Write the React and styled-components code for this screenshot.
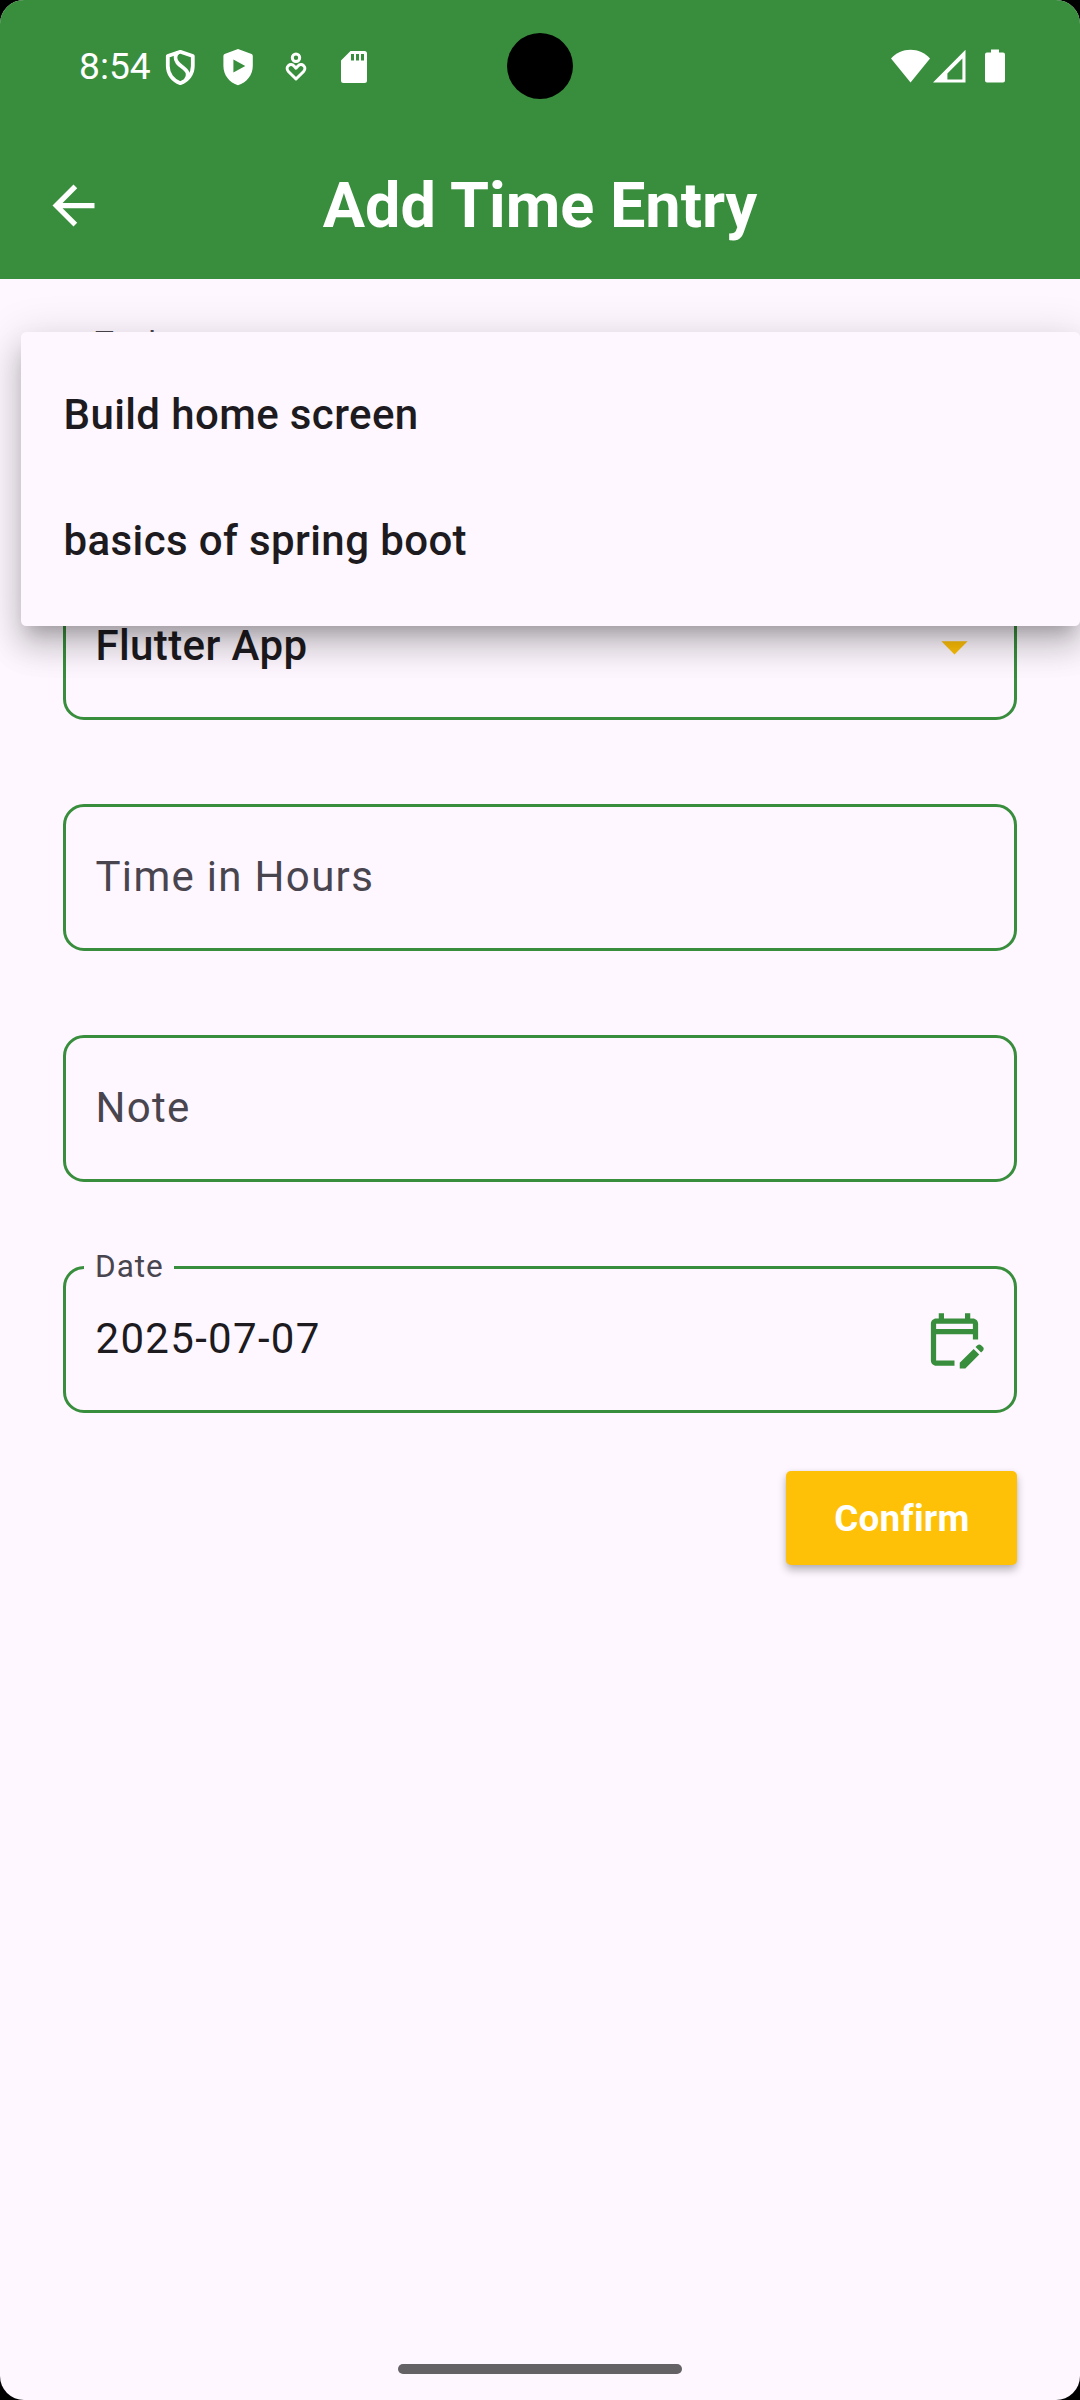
import React from "react";
import styled, { createGlobalStyle } from "styled-components";

const green = "#388e3c";
const amber = "#ffc107";
const surface = "#fef7ff";
const ink = "#1d1b20";
const muted = "#49454f";

const GlobalStyle = createGlobalStyle`
  *, *::before, *::after { box-sizing: border-box; }
  body { margin: 0; background: #000; }
`;

const Screen = styled.div`
  position: relative;
  display: flex;
  flex-direction: column;
  width: 1080px;
  height: 2400px;
  overflow: hidden;
  border-radius: 24px;
  background: ${surface};
  color: ${ink};
  font-family: Roboto, "Liberation Sans", sans-serif;
`;

const StatusBar = styled.header`
  position: relative;
  display: flex;
  align-items: center;
  justify-content: space-between;
  height: 132px;
  padding: 0 75px 0 79px;
  background: ${green};
  color: #fff;
`;

const StatusGroup = styled.div`
  display: flex;
  align-items: center;
  gap: ${(p) => p.$gap}px;
`;

const Clock = styled.span`
  width: 64px;
  font-size: 37.2px;
  white-space: nowrap;
`;

const CameraCutout = styled.div`
  position: absolute;
  left: 507px;
  top: 33px;
  width: 66px;
  height: 66px;
  border-radius: 50%;
  background: #000;
`;

const AppBar = styled.div`
  display: grid;
  grid-template-columns: 147px 1fr 147px;
  align-items: center;
  height: 147px;
  background: ${green};
  color: #fff;
`;

const BackButton = styled.button`
  display: flex;
  align-items: center;
  justify-content: center;
  width: 147px;
  height: 147px;
  padding: 0;
  border: 0;
  background: none;
  color: inherit;
`;

const Title = styled.h1`
  margin: 0;
  font-size: 63px;
  font-weight: 700;
  text-align: center;
  white-space: nowrap;
`;

const Form = styled.main`
  display: flex;
  flex: 1;
  flex-direction: column;
  gap: 84px;
  padding: 63px 63px 0;
`;

const Field = styled.div`
  position: relative;
  display: flex;
  align-items: center;
  justify-content: space-between;
  height: 147px;
  padding: 0 28px 0 29px;
  border: 3px solid ${green};
  border-radius: 21px;
`;

const FloatingLabel = styled.span`
  position: absolute;
  left: 18px;
  top: -21px;
  padding: 0 10.5px 0 11px;
  background: ${surface};
  color: ${muted};
  font-size: 31.5px;
  line-height: 37px;
  letter-spacing: 0.98px;
`;

const FieldText = styled.span`
  padding: 0 0 2px 0.5px;
  color: ${(p) => (p.$placeholder ? muted : ink)};
  font-size: 42px;
  font-weight: ${(p) => (p.$medium ? 500 : 400)};
  letter-spacing: ${(p) => (p.$medium ? 0.39 : 1.31)}px;
  white-space: nowrap;
`;

const Actions = styled.div`
  display: flex;
  justify-content: flex-end;
  margin-top: -26px;
`;

const ConfirmButton = styled.button`
  width: 231px;
  height: 94px;
  padding: 0 0 0 1px;
  border: 0;
  border-radius: 5px;
  background: ${amber};
  box-shadow: 0 5px 9px rgba(0, 0, 0, 0.28), 0 0 4px rgba(0, 0, 0, 0.06);
  color: #fff;
  font: 700 36.75px Roboto, "Liberation Sans", sans-serif;
  letter-spacing: 0.26px;
`;

const Menu = styled.ul`
  position: absolute;
  left: 21px;
  top: 332px;
  width: 1059px;
  margin: 0;
  padding: 21px 0;
  border-radius: 5.25px;
  background: ${surface};
  box-shadow: 0 13px 16px -8px rgba(0, 0, 0, 0.2), 0 21px 31px 2.6px rgba(0, 0, 0, 0.14),
    0 8px 43px 5.2px rgba(0, 0, 0, 0.12);
  list-style: none;
`;

const MenuItem = styled.li`
  display: flex;
  align-items: center;
  height: 126px;
  padding: 0 42px 3px 42.5px;
  font-size: 42px;
  font-weight: 500;
  letter-spacing: 0.39px;
`;

const NavBar = styled.footer`
  display: flex;
  justify-content: center;
  height: 36px;
`;

const Handle = styled.div`
  width: 284px;
  height: 10px;
  border-radius: 5px;
  background: #656266;
`;

const Glyph = styled.svg`
  display: block;
  flex: none;
  fill: ${(p) => p.$color || "#fff"};
`;

const ShieldS = () => (
  <Glyph width="42" height="42" viewBox="0 0 42 42">
    <g fill="none" stroke="#fff" strokeWidth="3.8" strokeLinejoin="round">
      <path d="M21.3 6.800 33.800 11V21C33.800 29 28.800 35.600 21.300 38.200 13.800 35.600 8.800 29 8.800 21V11Z" />
      <path d="M18.800 7.500C16 10 15.800 14 18.300 17.500 21.300 21.500 27.300 23.500 28.600 28 29.200 30.500 28.300 33 26.700 35" />
    </g>
  </Glyph>
);

const ShieldPlay = () => (
  <Glyph width="42" height="42" viewBox="0 0 42 42">
    <path fillRule="evenodd" d="M21 4 34.6 9Q35.8 9.5 35.8 11V21C35.8 30 29.5 37.8 21 40.2 12.5 37.8 6.4 30 6.4 21V11Q6.4 9.5 7.6 9ZM16.4 14.6V27.6L28.3 21.1Z" />
  </Glyph>
);

const HeartPerson = () => (
  <Glyph width="42" height="42" viewBox="0 0 42 42">
    <g fill="none" stroke="#fff" strokeWidth="3" strokeLinejoin="round">
      <circle cx="21" cy="12.8" r="3.7" />
      <path d="M21 34 13.400 26.500C9.500 22 15.500 17.200 19 21L21 23.200 23 21C26.500 17.200 32.500 22 28.600 26.500Z" />
    </g>
  </Glyph>
);

const SdCard = () => (
  <Glyph width="42" height="42" viewBox="0 0 42 42">
    <path fillRule="evenodd" d="M17.500 6H31.500A2.500 2.500 0 0 1 34 8.500V35.500A2.500 2.500 0 0 1 31.500 38H10.500A2.500 2.500 0 0 1 8 35.500V15.500ZM18 9V15.600H21V9ZM23 9V15.600H26V9ZM28 9V15.600H31V9Z" />
  </Glyph>
);

const Wifi = () => (
  <Glyph width="39" height="34" viewBox="0 0 39 34">
    <path d="M19.500 33.500 0 9.500C5 4 12 .8 19.500 .8S34 4 39 9.500Z" />
  </Glyph>
);

const Signal = () => (
  <Glyph width="33" height="34" viewBox="0 0 33 34">
    <path fillRule="evenodd" d="M32.500 .8V33.500H0ZM29.400 9.400 14.400 24.500V30.400H29.400Z" />
  </Glyph>
);

const Battery = () => (
  <Glyph width="20" height="34" viewBox="0 0 20 34">
    <path d="M6 .6H14V3.600H18Q20 3.600 20 5.600V31.500Q20 33.500 18 33.500H2Q0 33.500 0 31.500V5.600Q0 3.600 2 3.600H6Z" />
  </Glyph>
);

const Cellular = styled.div`
  display: flex;
  align-items: center;
  gap: 3.5px;
`;

const BackArrow = () => (
  <Glyph width="63" height="63" viewBox="0 0 24 24">
    <path d="M20 11H7.830l5.590-5.590L12 4l-8 8 8 8 1.410-1.410L7.830 13H20v-2z" />
  </Glyph>
);

const DropArrow = () => (
  <Glyph width="63" height="63" viewBox="0 0 24 24" $color={amber}>
    <path d="M7 10l5 5 5-5z" />
  </Glyph>
);

const EditCalendar = () => (
  <Glyph width="63" height="63" viewBox="0 0 24 24" $color={green}>
    <path d="M21 12V6c0-1.100-.9-2-2-2h-1V2h-2v2H8V2H6v2H5c-1.100 0-2 .9-2 2v14c0 1.100.9 2 2 2h7v-2H5V10h14v2h2zM19 8H5V6h14v2zM22.840 16.280l-.71.71-2.120-2.120.71-.71c.39-.39 1.020-.39 1.410 0l.71.71c.39.39.39 1.020 0 1.410zM19.300 15.580l2.120 2.120-5.300 5.300H14v-2.120l5.300-5.300z" />
  </Glyph>
);

const tasks = ["Build home screen", "basics of spring boot"];

export default function App() {
  return (
    <>
      <GlobalStyle />
      <Screen>
        <StatusBar>
          <StatusGroup $gap={16}>
            <Clock>8:54</Clock>
            <ShieldS />
            <ShieldPlay />
            <HeartPerson />
            <SdCard />
          </StatusGroup>
          <CameraCutout />
          <StatusGroup $gap={19}>
            <Cellular>
              <Wifi />
              <Signal />
            </Cellular>
            <Battery />
          </StatusGroup>
        </StatusBar>
        <AppBar>
          <BackButton aria-label="Back">
            <BackArrow />
          </BackButton>
          <Title>Add Time Entry</Title>
        </AppBar>
        <Form>
          <Field>
            <FloatingLabel>Task</FloatingLabel>
          </Field>
          <Field>
            <FieldText $medium>Flutter App</FieldText>
            <DropArrow />
          </Field>
          <Field>
            <FieldText $placeholder>Time in Hours</FieldText>
          </Field>
          <Field>
            <FieldText $placeholder>Note</FieldText>
          </Field>
          <Field>
            <FloatingLabel>Date</FloatingLabel>
            <FieldText>2025-07-07</FieldText>
            <EditCalendar />
          </Field>
          <Actions>
            <ConfirmButton>Confirm</ConfirmButton>
          </Actions>
        </Form>
        <NavBar>
          <Handle />
        </NavBar>
        <Menu>
          {tasks.map((t) => (
            <MenuItem key={t}>{t}</MenuItem>
          ))}
        </Menu>
      </Screen>
    </>
  );
}
